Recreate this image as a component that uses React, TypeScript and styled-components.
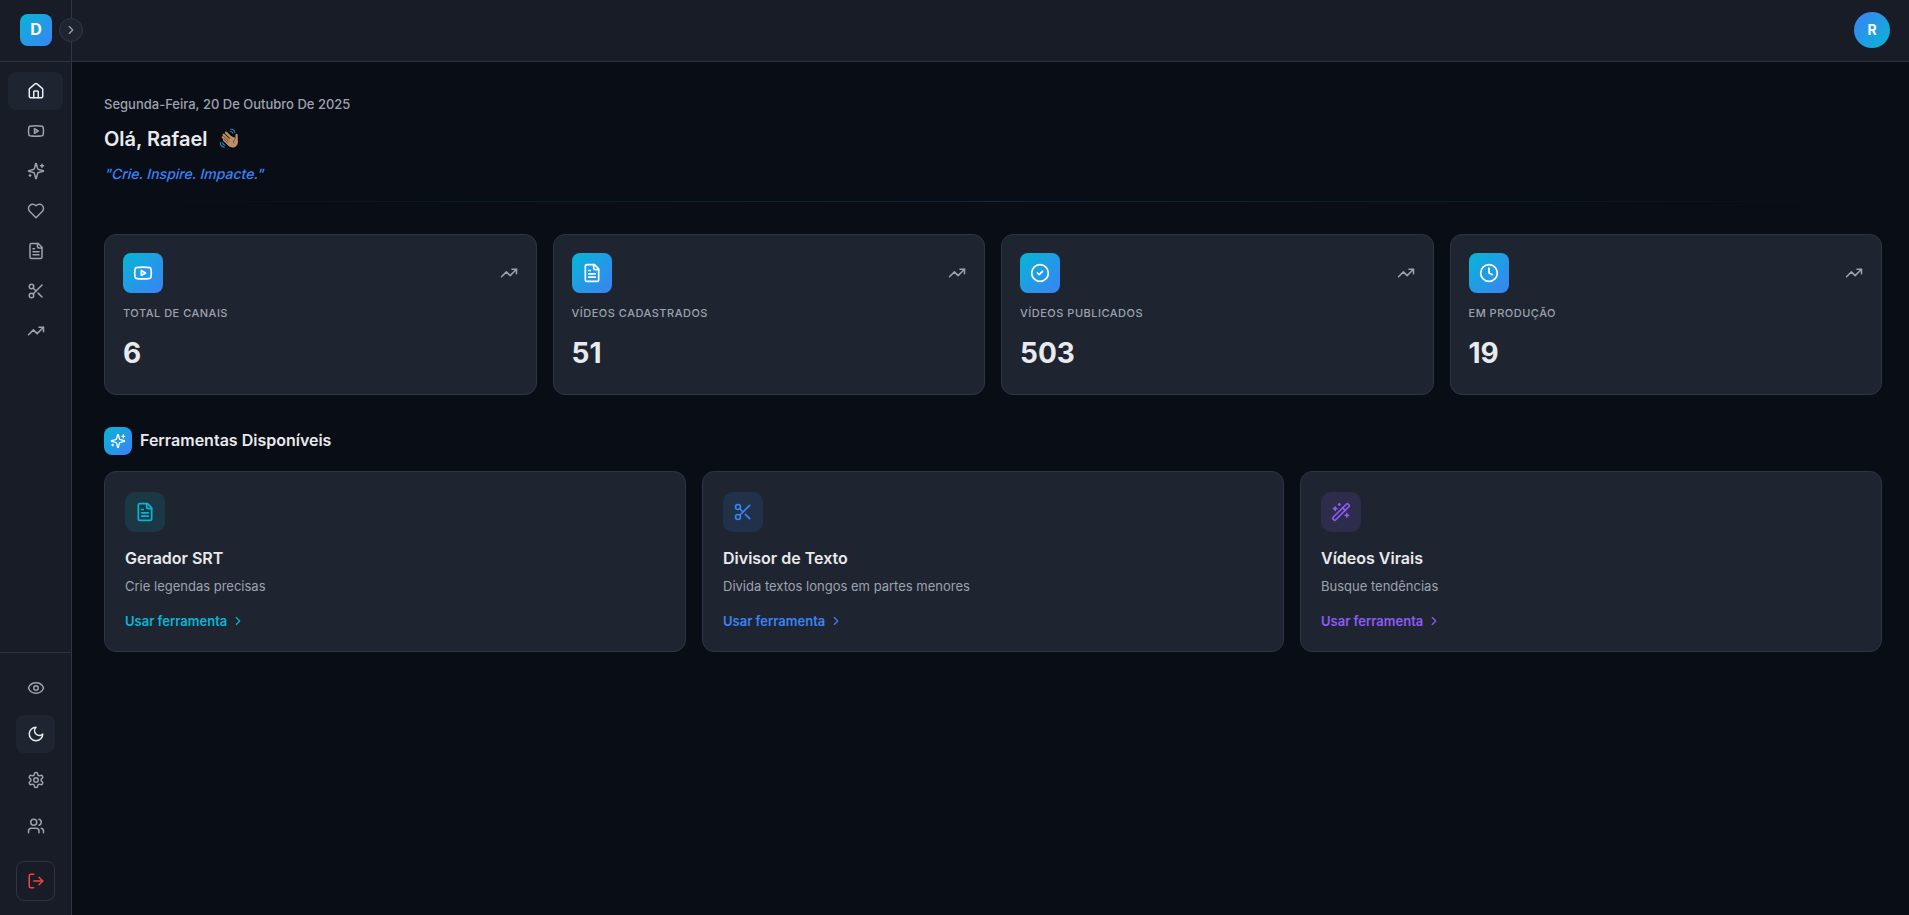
import React from 'react';
import styled, { createGlobalStyle } from 'styled-components';
import { ChevronRight, CircleCheck, Clock, Eye, House, LogOut, Scissors, TrendingUp, Users, WandSparkles, Youtube } from 'lucide-react';

const Global = createGlobalStyle`
  *, *::before, *::after { box-sizing: border-box; }
  html, body { margin: 0; padding: 0; background: #090d15; }
  body { font-family: Inter, "Liberation Sans", sans-serif; color: #e8eaed; overflow: hidden; }
  h1, h2, h3, p { margin: 0; }
  button { font: inherit; padding: 0; border: 0; background: none; }
  svg { display: block; flex-shrink: 0; }
`;

type IconProps = { size?: number };

const Stroke = ({ size = 18, children }: IconProps & { children: React.ReactNode }) => (
  <svg width={size} height={size} viewBox="0 0 24 24" fill="none" stroke="currentColor" strokeWidth="2" strokeLinecap="round" strokeLinejoin="round">
    {children}
  </svg>
);

const Sparkles = ({ size }: IconProps) => (
  <Stroke size={size}>
    <path d="M9.937 15.5A2 2 0 0 0 8.5 14.063l-6.135-1.582a.5.5 0 0 1 0-.962L8.5 9.936A2 2 0 0 0 9.937 8.5l1.582-6.135a.5.5 0 0 1 .963 0L14.063 8.5A2 2 0 0 0 15.5 9.937l6.135 1.581a.5.5 0 0 1 0 .964L15.5 14.063a2 2 0 0 0-1.437 1.437l-1.582 6.135a.5.5 0 0 1-.963 0z" />
    <path d="M20 3v4M22 5h-4M4 17v2M5 18H3" />
  </Stroke>
);

const Heart = ({ size }: IconProps) => (
  <Stroke size={size}>
    <path d="M19 14c1.49-1.46 3-3.21 3-5.5A5.5 5.5 0 0 0 16.5 3c-1.76 0-3 .5-4.5 2-1.5-1.5-2.74-2-4.5-2A5.5 5.5 0 0 0 2 8.5c0 2.3 1.5 4.05 3 5.5l7 7Z" />
  </Stroke>
);

const FileText = ({ size }: IconProps) => (
  <Stroke size={size}>
    <path d="M15 2H6a2 2 0 0 0-2 2v16a2 2 0 0 0 2 2h12a2 2 0 0 0 2-2V7Z" />
    <path d="M14 2v4a2 2 0 0 0 2 2h4M10 9H8M16 13H8M16 17H8" />
  </Stroke>
);

const Moon = ({ size }: IconProps) => (
  <Stroke size={size}>
    <path d="M12 3a6 6 0 0 0 9 9 9 9 0 1 1-9-9Z" />
  </Stroke>
);

const Gear = ({ size }: IconProps) => (
  <Stroke size={size}>
    <path d="M12.22 2h-.44a2 2 0 0 0-2 2v.18a2 2 0 0 1-1 1.73l-.43.25a2 2 0 0 1-2 0l-.15-.08a2 2 0 0 0-2.73.73l-.22.38a2 2 0 0 0 .73 2.73l.15.1a2 2 0 0 1 1 1.72v.51a2 2 0 0 1-1 1.74l-.15.09a2 2 0 0 0-.73 2.73l.22.38a2 2 0 0 0 2.73.73l.15-.08a2 2 0 0 1 2 0l.43.25a2 2 0 0 1 1 1.73V20a2 2 0 0 0 2 2h.44a2 2 0 0 0 2-2v-.18a2 2 0 0 1 1-1.73l.43-.25a2 2 0 0 1 2 0l.15.08a2 2 0 0 0 2.73-.73l.22-.39a2 2 0 0 0-.73-2.73l-.15-.08a2 2 0 0 1-1-1.74v-.5a2 2 0 0 1 1-1.74l.15-.09a2 2 0 0 0 .73-2.73l-.22-.38a2 2 0 0 0-2.73-.73l-.15.08a2 2 0 0 1-2 0l-.43-.25a2 2 0 0 1-1-1.73V4a2 2 0 0 0-2-2z" />
    <circle cx="12" cy="12" r="3" />
  </Stroke>
);

const WavingHand = () => {
  const fingers = 'M7 4.600l6.500 6.500M4.600 6.700l7 7M3.800 9.300l7 7M5 12.100l6 5.400M17.600 7v6';
  const palm = 'M12 8.500l4.300 1.500 2.300 3.200c.4 3.300-1.600 5.900-4.600 6.100-2.500 0-4.500-1.800-6-3.600z';
  return (
    <svg width="22" height="22" viewBox="0 0 22 22" fill="none" strokeLinecap="round" strokeLinejoin="round">
      <path d={fingers} stroke="#04060a" strokeWidth="4.200" />
      <path d={palm} stroke="#04060a" strokeWidth="2.600" />
      <path d={fingers} stroke="#be8f66" strokeWidth="2.300" />
      <path d={palm} fill="#be8f66" stroke="#be8f66" strokeWidth=".6" />
      <path d="M6.200 6l4.700 4.700M4.700 8.200l4.900 4.900M4.800 10.900l4 4M16.300 10.700c-1.600 1.200-2.100 2.600-1.600 4.300" stroke="#4b3526" strokeWidth=".7" />
      <path d="M11.500 1.300c2.200-.3 4 1 4.400 3.300M11.300 3.500c1.300-.1 2.200.6 2.500 1.800M1.400 14.500c-.1 2.500 1.400 4.300 3.900 4.600M3.700 14.500c0 1.400.8 2.300 2.200 2.500" stroke="#1d8ba5" strokeWidth="1.100" />
    </svg>
  );
};

const Shell = styled.div`
  display: grid;
  grid-template-columns: 72px 1fr;
  height: 915px;
`;

const Sidebar = styled.aside`
  display: flex;
  flex-direction: column;
  border-right: 1px solid #2d3446;
  background: #181c26;
`;

const Brand = styled.div`
  position: relative;
  display: flex;
  height: 62px;
  padding: 14px 20px;
  border-bottom: 1px solid #2d3446;
`;

const Logo = styled.div`
  display: grid;
  flex-shrink: 0;
  place-items: center;
  width: 32px;
  height: 32px;
  padding-bottom: 2px;
  border-radius: 8px;
  background: linear-gradient(135deg, #06b6d4, #3b82f6);
  color: #fff;
  font-size: 16px;
  font-weight: 700;
`;

const Expand = styled.button`
  position: absolute;
  top: 18px;
  right: -12px;
  display: grid;
  place-items: center;
  width: 24px;
  height: 24px;
  border: 1px solid #2d3748;
  border-radius: 50%;
  background: #1f2530;
  color: #9ca3af;
`;

const Nav = styled.nav`
  display: flex;
  flex: 1;
  flex-direction: column;
  gap: 2px;
  padding: 10px 8px;
`;

const NavItem = styled.button<{ $active?: boolean }>`
  display: grid;
  place-items: center;
  height: 38px;
  padding-left: 1px;
  border-radius: 8px;
  background: ${p => (p.$active ? '#1f2530' : 'transparent')};
  color: ${p => (p.$active ? '#e8eaed' : '#9ca3af')};
`;

const Footer = styled.div`
  display: flex;
  flex-direction: column;
  gap: 8px;
  padding: 16px 16px 14px;
  border-top: 1px solid #2d3446;
`;

const LogoutButton = styled.button`
  display: grid;
  place-items: center;
  height: 40px;
  margin-top: 8px;
  border: 1px solid #2d3446;
  border-radius: 8px;
  color: #ef4444;
`;

const Page = styled.div`
  display: flex;
  flex-direction: column;
  min-width: 0;
`;

const TopBar = styled.header`
  display: flex;
  justify-content: flex-end;
  height: 62px;
  padding: 12px 19px;
  border-bottom: 1px solid #2d3446;
  background: #181c26;
`;

const Avatar = styled.div`
  display: grid;
  place-items: center;
  width: 36px;
  height: 36px;
  padding-bottom: 2px;
  border-radius: 50%;
  background: linear-gradient(135deg, #3b82f6, #06b6d4);
  color: #fff;
  font-size: 14px;
  font-weight: 700;
`;

const Main = styled.main`
  display: flex;
  flex: 1;
  flex-direction: column;
  padding: 32px 27px 0 32px;
`;

const DateLine = styled.p`
  height: 20px;
  color: #9ca3af;
  font-size: 13px;
  font-weight: 500;
  line-height: 20px;
`;

const Greeting = styled.h1`
  display: flex;
  align-items: center;
  gap: 11px;
  height: 28px;
  margin-top: 11px;
  font-size: 20px;
  font-weight: 600;
  line-height: 28px;
`;

const Quote = styled.p`
  align-self: flex-start;
  height: 20px;
  margin-top: 11px;
  color: #3b82f6;
  font-size: 14px;
  font-weight: 500;
  line-height: 20px;
  transform: skewX(-14deg);
  transform-origin: 0 15px;
`;

const Divider = styled.div`
  height: 1px;
  margin: 17px 0 32px;
  background: linear-gradient(90deg, transparent, rgba(6, 182, 212, 0.2), transparent);
`;

const StatGrid = styled.section`
  display: grid;
  grid-template-columns: repeat(4, 1fr);
  gap: 16px;
`;

const Card = styled.article`
  border: 1px solid #2d3446;
  border-radius: 12px;
  background: #1f2530;
`;

const StatCard = styled(Card)`
  height: 161px;
  padding: 18px;
`;

const StatTop = styled.div`
  display: flex;
  align-items: center;
  justify-content: space-between;
  color: #9ca3af;
`;

const GradientTile = styled.div<{ $size: number }>`
  display: grid;
  place-items: center;
  width: ${p => p.$size}px;
  height: ${p => p.$size}px;
  border-radius: 8px;
  background: linear-gradient(135deg, #06b6d4, #3b82f6);
  color: #fff;
`;

const StatLabel = styled.p`
  margin-top: 12px;
  color: #9ca3af;
  font-size: 11px;
  font-weight: 500;
  letter-spacing: 0.5px;
  line-height: 16px;
  text-transform: uppercase;
`;

const StatValue = styled.p`
  margin-top: 14px;
  font-size: 28px;
  font-weight: 700;
  line-height: 36px;
`;

const SectionTitle = styled.h2`
  display: flex;
  align-items: center;
  gap: 8px;
  height: 28px;
  margin: 32px 0 16px;
  font-size: 16px;
  font-weight: 600;
  line-height: 26px;
`;

const SectionName = styled.span`
  padding-bottom: 2px;
`;

const ToolGrid = styled.section`
  display: grid;
  grid-template-columns: repeat(3, 1fr);
  gap: 16px;
`;

const ToolCard = styled(Card)`
  height: 181px;
  padding: 20px;
`;

const ToolTile = styled.div<{ $color: string }>`
  display: grid;
  place-items: center;
  width: 40px;
  height: 40px;
  border-radius: 10px;
  background: ${p => p.$color}22;
  color: ${p => p.$color};
`;

const ToolName = styled.h3`
  margin-top: 14px;
  font-size: 16px;
  font-weight: 600;
  line-height: 24px;
`;

const ToolText = styled.p`
  margin-top: 6px;
  color: #9ca3af;
  font-size: 13px;
  line-height: 20px;
`;

const ToolLink = styled.div<{ $color: string }>`
  display: flex;
  align-items: center;
  gap: 4px;
  margin-top: 15px;
  color: ${p => p.$color};
  font-size: 13px;
  font-weight: 600;
  line-height: 20px;
`;

const navItems = [House, Youtube, Sparkles, Heart, FileText, Scissors, TrendingUp];
const footerItems = [Eye, Moon, Gear, Users];

const stats = [
  { icon: Youtube, label: 'Total de canais', value: 6 },
  { icon: FileText, label: 'Vídeos cadastrados', value: 51 },
  { icon: CircleCheck, label: 'Vídeos publicados', value: 503 },
  { icon: Clock, label: 'Em produção', value: 19 },
];

const tools = [
  { icon: FileText, color: '#06b6d4', name: 'Gerador SRT', text: 'Crie legendas precisas' },
  { icon: Scissors, color: '#3b82f6', name: 'Divisor de Texto', text: 'Divida textos longos em partes menores' },
  { icon: WandSparkles, color: '#8b5cf6', name: 'Vídeos Virais', text: 'Busque tendências' },
];

export default function App() {
  return (
    <>
      <Global />
      <Shell>
        <Sidebar>
          <Brand>
            <Logo>D</Logo>
            <Expand><ChevronRight size={14} /></Expand>
          </Brand>
          <Nav>
            {navItems.map((Icon, i) => (
              <NavItem key={i} $active={i === 0}><Icon size={18} /></NavItem>
            ))}
          </Nav>
          <Footer>
            {footerItems.map((Icon, i) => (
              <NavItem key={i} $active={i === 1}><Icon size={18} /></NavItem>
            ))}
            <LogoutButton><LogOut size={18} /></LogoutButton>
          </Footer>
        </Sidebar>
        <Page>
          <TopBar><Avatar>R</Avatar></TopBar>
          <Main>
            <DateLine>Segunda-Feira, 20 De Outubro De 2025</DateLine>
            <Greeting>Olá, Rafael <WavingHand /></Greeting>
            <Quote>"Crie. Inspire. Impacte."</Quote>
            <Divider />
            <StatGrid>
              {stats.map(({ icon: Icon, label, value }) => (
                <StatCard key={label}>
                  <StatTop>
                    <GradientTile $size={40}><Icon size={20} /></GradientTile>
                    <TrendingUp size={18} />
                  </StatTop>
                  <StatLabel>{label}</StatLabel>
                  <StatValue>{value}</StatValue>
                </StatCard>
              ))}
            </StatGrid>
            <SectionTitle>
              <GradientTile $size={28}><Sparkles size={16} /></GradientTile>
              <SectionName>Ferramentas Disponíveis</SectionName>
            </SectionTitle>
            <ToolGrid>
              {tools.map(({ icon: Icon, color, name, text }) => (
                <ToolCard key={name}>
                  <ToolTile $color={color}><Icon size={20} /></ToolTile>
                  <ToolName>{name}</ToolName>
                  <ToolText>{text}</ToolText>
                  <ToolLink $color={color}>Usar ferramenta <ChevronRight size={14} /></ToolLink>
                </ToolCard>
              ))}
            </ToolGrid>
          </Main>
        </Page>
      </Shell>
    </>
  );
}
